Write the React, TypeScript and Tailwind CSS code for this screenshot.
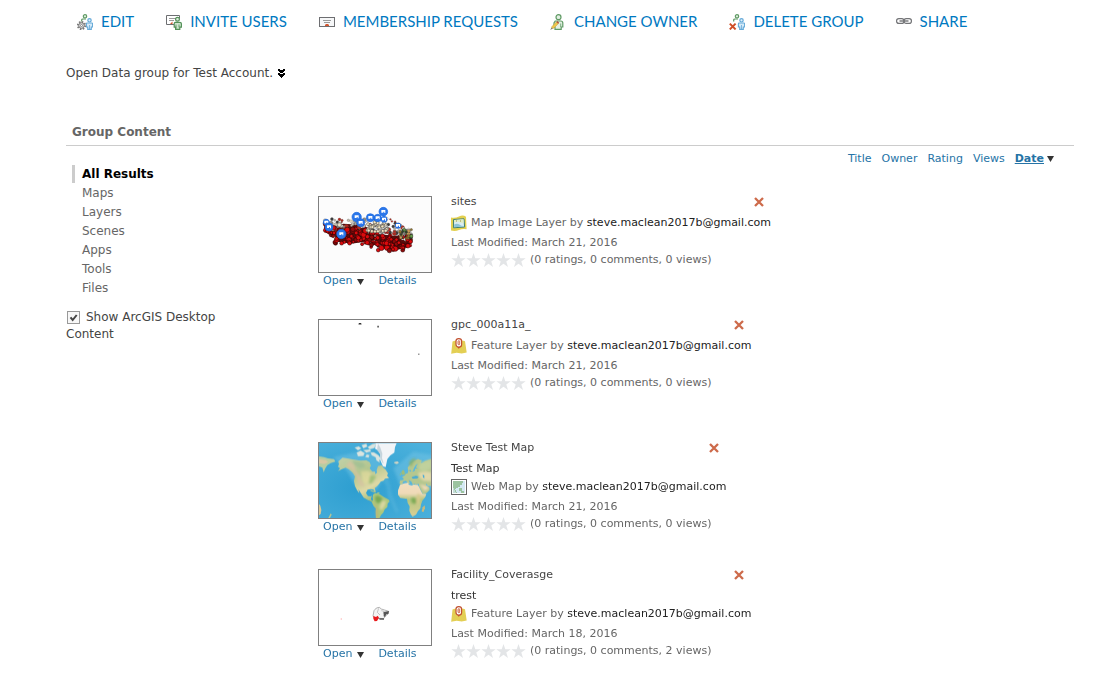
import { useState } from 'react'
import type { ReactNode } from 'react'

type Thumb = 'sites' | 'points' | 'world' | 'facility'
type Kind = 'Map Image Layer' | 'Feature Layer' | 'Web Map'

interface GroupItem {
  title: string
  description?: string
  kind: Kind
  owner: string
  modified: string
  views: number
  thumb: Thumb
}

const OWNER = 'steve.maclean2017b@gmail.com'

const items: GroupItem[] = [
  { title: 'sites', kind: 'Map Image Layer', owner: OWNER, modified: 'March 21, 2016', views: 0, thumb: 'sites' },
  { title: 'gpc_000a11a_', kind: 'Feature Layer', owner: OWNER, modified: 'March 21, 2016', views: 0, thumb: 'points' },
  {
    title: 'Steve Test Map',
    description: 'Test Map',
    kind: 'Web Map',
    owner: OWNER,
    modified: 'March 21, 2016',
    views: 0,
    thumb: 'world',
  },
  {
    title: 'Facility_Coverasge',
    description: 'trest',
    kind: 'Feature Layer',
    owner: OWNER,
    modified: 'March 18, 2016',
    views: 2,
    thumb: 'facility',
  },
]

const categories = ['All Results', 'Maps', 'Layers', 'Scenes', 'Apps', 'Tools', 'Files']
const sortFields = ['Title', 'Owner', 'Rating', 'Views', 'Date']

function Icon({ children }: { children: ReactNode }) {
  return (
    <svg viewBox="0 0 16 16" className="size-4 shrink-0" fill="none" aria-hidden="true">
      {children}
    </svg>
  )
}

// back green member and front blue member, shared by Edit and Delete
function Members() {
  return (
    <>
      <circle cx="8" cy="2.3" r="1.7" fill="#e3f0e3" stroke="#5f9a64" strokeWidth="1.2" />
      <path d="M4.7 7.5V6.2Q4.7 5 6 5h3" stroke="#5f9a64" strokeWidth="1.2" />
      <circle cx="12.5" cy="6.3" r="1.7" fill="#e1f0fa" stroke="#65a9d8" strokeWidth="1.2" />
      <path
        d="M10 9h5q.6 0 .6.8V13h-1.3v2.4h-3.6V13H9.4V9.8Q9.4 9 10 9z"
        fill="#d5eaf8"
        stroke="#65a9d8"
        strokeWidth="1.1"
      />
      <path d="M12.5 11v4" stroke="#65a9d8" strokeWidth=".8" />
    </>
  )
}

function EditIcon() {
  return (
    <Icon>
      <Members />
      <circle cx="4.5" cy="11.5" r="3.6" stroke="#777" strokeWidth="2" strokeDasharray="1.5 1.3" />
      <circle cx="4.5" cy="11.5" r="2.8" fill="#ddd" stroke="#777" strokeWidth="1" />
      <circle cx="4.5" cy="11.5" r="1" fill="#fff" stroke="#777" strokeWidth=".8" />
    </Icon>
  )
}

function InviteIcon() {
  return (
    <Icon>
      <path d="M8 10.5H.5v-9h13v3" stroke="#6d6e71" />
      <path d="M3 4.5h7M3 6.5h5" stroke="#999" />
      <path d="M4 10l2.5-2.5V10z" fill="#d3562f" />
      <circle cx="11.5" cy="5.3" r="1.9" fill="#dcecdc" stroke="#549159" strokeWidth="1.2" />
      <path
        d="M9.4 8.3h4.4q1.6 0 1.6 1.5v3.4h-1.6v2.2H9.6v-2.2H8.2V9.8q0-1.5 1.2-1.5z"
        fill="#cfe5cf"
        stroke="#549159"
        strokeWidth="1.2"
      />
      <path d="M10 10.5v4M13 10.5v3" stroke="#549159" strokeWidth=".8" />
    </Icon>
  )
}

function RequestIcon() {
  return (
    <Icon>
      <rect x=".5" y="3.5" width="15" height="9" fill="#f6f7f8" stroke="#6d6e71" />
      <path d="M4 6.5h8M5 8.5h6" stroke="#999" />
      <path d="M6 12v-1l1-1h2l1 1v1z" fill="#d3562f" />
    </Icon>
  )
}

function OwnerIcon() {
  return (
    <Icon>
      <circle cx="8.5" cy="3.2" r="2.5" fill="#e3f0e3" stroke="#5f9a64" strokeWidth="1.2" />
      <path
        d="M5.2 7h5.6q2 0 2 2v4h-1.6v2.4H5V13H4V9z"
        fill="#e3f0e3"
        stroke="#5f9a64"
        strokeWidth="1.2"
      />
      <path d="M10.7 9.5V13" stroke="#5f9a64" strokeWidth=".8" />
      <path d="M1.6 14.4l.4-2 4.6-4.6 1.8 1.8-4.6 4.6z" fill="#edc64b" stroke="#c89b3a" strokeWidth=".5" />
      <path d="M6.3 8l1.1-1.100 1.800 1.800-1.100 1.100z" fill="#b44b3c" />
      <path d="M.3 16l1.200-2.600 1.300 1.200z" fill="#777" />
    </Icon>
  )
}

function DeleteIcon() {
  return (
    <Icon>
      <Members />
      <path d="M.8 9.6l5.8 5.8M6.6 9.6L.8 15.4" stroke="#cf4e27" strokeWidth="2" />
    </Icon>
  )
}

function ShareIcon() {
  return (
    <Icon>
      <rect x=".6" y="4.600" width="7.400" height="4.800" rx="2.200" stroke="#737477" strokeWidth="1.200" />
      <rect x="8" y="4.600" width="7.400" height="4.800" rx="2.200" stroke="#737477" strokeWidth="1.200" />
      <path d="M3.500 7h9" stroke="#737477" strokeWidth="1.400" />
    </Icon>
  )
}

const actions = [
  { label: 'EDIT', icon: <EditIcon /> },
  { label: 'INVITE USERS', icon: <InviteIcon /> },
  { label: 'MEMBERSHIP REQUESTS', icon: <RequestIcon /> },
  { label: 'CHANGE OWNER', icon: <OwnerIcon /> },
  { label: 'DELETE GROUP', icon: <DeleteIcon /> },
  { label: 'SHARE', icon: <ShareIcon /> },
]

function KindIcon({ kind }: { kind: Kind }) {
  if (kind === 'Map Image Layer') {
    return (
      <Icon>
        <path d="M0 2.5q4 1 8-1t7 .3l.6 12.4q-4-.8-7.6.8t-8 .6z" fill="#e3d04f" />
        <path d="M2.5 4.5l10.5-.7.6 8.2-11 .8z" fill="#d9edf3" stroke="#3f7e6c" />
        <path d="M3.200 9.500q3-1.500 5 0t5 1.500v.6L3.200 12.200z" fill="#8cc4d8" />
        <path d="M3 5l9.500-.7V8Q10 8 8 7t-5 .5z" fill="#e0eec4" />
        <path d="M5 6h1M9 6h1" stroke="#9c8a3e" />
      </Icon>
    )
  }
  if (kind === 'Feature Layer') {
    return (
      <Icon>
        <path d="M1.500 3.500l3-1 3 1 4-1 2.500.8 1.700 11.200-5 1-5-.8-5.500 1z" fill="#e3cf54" />
        <rect x="5" y=".6" width="5.600" height="8.600" rx="2.700" fill="#fff" stroke="#c1502f" strokeWidth="1.200" />
        <rect x="7" y="2.700" width="1.700" height="4" rx=".8" fill="#f5d6cb" stroke="#c1502f" strokeWidth=".8" />
        <path d="M6.700 9h2.300L7.800 11z" fill="#c1502f" />
      </Icon>
    )
  }
  return (
    <Icon>
      <rect x=".5" y=".5" width="15" height="15" fill="#fff" stroke="#666" />
      <path d="M2 2h12v12H2z" fill="#d4e9f3" />
      <path d="M2 2h10v2h-1v2H9v2H7v1H5v1H4v1h1v2h1v1H2z" fill="#9cc3a0" />
      <path d="M2 9h1v2h1v2h1v1H2z" fill="#c3dcd7" />
      <path d="M8 9h3v3h2v2h-3v-2H8z" fill="#9cc3a0" />
    </Icon>
  )
}

// small deterministic generator for the clutter of symbols
function scatter(count: number, seed: number) {
  let s = seed
  const next = () => {
    s = (s * 16807) % 2147483647
    return s / 2147483647
  }
  return Array.from({ length: count }, () => [next(), next(), next()])
}

const topEdge = (x: number) => (x < 120 ? 100 : x < 240 ? 100 : 100 + (x - 240) * 0.6)
const bottomEdge = (x: number) => (x < 75 ? 126 + (x - 40) * 1.4 : x < 180 ? 180 : x < 290 ? 198 : 186)

function place([a, b]: number[], upper: number, lower: number) {
  const x = 45 + a * 258
  const top = topEdge(x)
  const h = bottomEdge(x) - top
  return [x, top + h * (upper + b * (lower - upper))]
}

const tones = ['#c9c1b2', '#8c8c8c', '#f1e6c8', '#ffffff', '#3b3b3b', '#b9b8b5', '#b42b20']
const blues = [
  [49, 112, 9],
  [57, 126, 12],
  [94, 147, 14],
  [140, 96, 14],
  [152, 113, 12],
  [181, 98, 12],
  [203, 99, 11],
  [220, 80, 13],
  [222, 103, 9],
  [264, 122, 8],
]

function SitesThumb() {
  return (
    <svg viewBox="27 36 336 225" className="block size-full" aria-hidden="true">
      <path d="M27 36h336v225H27z" fill="#fcfcfc" />
      <path
        d="M60 128l40-12 60 4 40 26 50 6 40-6 14 20-10 20-30 8-40-2-30-26-30 4-40 6-40-6z"
        fill="#5a0c0c"
      />
      {scatter(180, 71).map((p, i) => {
        const [x, y] = place(p, 0, 0.55)
        return (
          <circle
            key={i}
            cx={x}
            cy={y}
            r={2.5 + p[2] * 4}
            fill={tones[i % tones.length]}
            stroke="#444"
            strokeWidth=".8"
          />
        )
      })}
      {scatter(180, 913).map((p, i) => {
        const [x, y] = place(p, 0.4, 1)
        return (
          <circle
            key={i}
            cx={x}
            cy={y}
            r={3 + p[2] * 5}
            fill={i % 5 ? '#dc0a0d' : '#8d0b0b'}
            stroke="#1c0202"
            strokeWidth="1.5"
          />
        )
      })}
      {scatter(34, 401).map((p, i) => (
        <circle
          key={i}
          cx={172 + p[0] * 62}
          cy={112 + p[1] * 32}
          r="4.500"
          fill="#f3e4c1"
          stroke="#444"
          strokeWidth="1.500"
        />
      ))}
      {scatter(22, 55).map((p, i) => (
        <circle
          key={i}
          cx={270 + p[0] * 34}
          cy={134 + p[1] * 26}
          r={3 + p[2] * 3}
          fill={['#96772d', '#2f4a2a', '#c99b5a', '#6aa04c'][i % 4]}
          stroke="#222"
        />
      ))}
      {blues.map(([x, y, r]) => (
        <g key={`${x}-${y}`}>
          <circle cx={x} cy={y} r={r} fill="#2b77ea" stroke="#1667df" strokeWidth="2" />
          <path d={`M${x - 6} ${y - 5}h12v9h-3v-4h-3v3h-6z`} fill="#fff" />
        </g>
      ))}
    </svg>
  )
}

function PointsThumb() {
  return (
    <svg viewBox="0 0 112 75" className="block size-full" aria-hidden="true">
      <path d="M40 3h2v1h-2zM39.500 3.500h3v1h-3z" fill="#333" />
      <path d="M58.300 5.700h1.600v1.800h-1.600z" fill="#555" />
      <path d="M99 33.500h1.500V35H99z" fill="#999" />
    </svg>
  )
}

function FacilityThumb() {
  return (
    <svg viewBox="27 30 336 225" className="block size-full" aria-hidden="true">
      <path
        d="M192 152l7-8 9-2 6 5 10 3 12 4-2 8-8 6-5 8-12-1-14 2-6-9z"
        fill="#f4f4f4"
        stroke="#8f8f8f"
        strokeWidth="2"
      />
      <path d="M206 145l-4 12 8 8M214 152l8 2-2 6 6 2" stroke="#aaa" strokeWidth="2" fill="none" />
      <path d="M221 156l16-3-2 9-6 1-4 8-4-2z" fill="#555" />
      <path d="M190 168l8 3 5-4 4 6-6 10-7 1-4-8z" fill="#e8191c" />
      <path d="M207 175h15v4h-13z" fill="#555" />
      <path d="M92 175h4v4h-4z" fill="#ffc4c4" />
    </svg>
  )
}

function WorldThumb() {
  return (
    <svg viewBox="27 24 336 225" preserveAspectRatio="none" className="block size-full" aria-hidden="true">
      <defs>
        <radialGradient id="sea" cx=".35" cy=".6" r=".8">
          <stop offset="0" stopColor="#2d9ed0" />
          <stop offset="1" stopColor="#4cb1dc" />
        </radialGradient>
        <linearGradient id="america" x1="0" y1="0" x2=".6" y2="1">
          <stop offset="0" stopColor="#c2d1a9" />
          <stop offset=".45" stopColor="#b4c68f" />
          <stop offset=".75" stopColor="#dfd9a6" />
          <stop offset="1" stopColor="#9dba74" />
        </linearGradient>
        <linearGradient id="africa" x1="0" y1="0" x2="0" y2="1">
          <stop offset="0" stopColor="#f3dfc0" />
          <stop offset=".32" stopColor="#efdab8" />
          <stop offset=".5" stopColor="#b5c680" />
          <stop offset="1" stopColor="#dccf94" />
        </linearGradient>
        <filter id="soft">
          <feGaussianBlur stdDeviation="4" />
        </filter>
        <filter id="patch">
          <feGaussianBlur stdDeviation="2.500" />
        </filter>
      </defs>
      <path d="M27 24h336v225H27z" fill="url(#sea)" />
      <g fill="#7cc8e6" opacity=".45" filter="url(#soft)">
        <path d="M70 66l50-10 60-10 50 60-30 60-60-10-30-50zM250 100l60-50 60 10v100l-100-10z" />
        <path d="M212 100l26 40 8 40 20 50-8 4-24-50-4-30-24-40z" opacity=".6" />
      </g>
      {/* eastern Siberia */}
      <path d="M27 64l15 2 12 4 18 2 4 8-14 4-10 6-6 10-5 12-4-14-10-4z" fill="#b6cda2" />
      <path d="M27 72l20 3 8 6-12 6-16-2z" fill="#d8c8a4" />
      {/* Arctic islands */}
      <g fill="#dbe4df" stroke="#8fc7db" strokeWidth="1">
        <path d="M140 53l12-6 12 7-4 9-16 1zM134 38l12-4 8 6-10 6zM155 30l14-4 3 9-12 5zM173 36l14-9 13-3-7 15-14 4z" />
        <path d="M160 45l20-2 3 6-14 4zM182 52l10 0 14 9 8 12-6 2 1 8-10-7-2-9-12-6zM170 58l8 2-2 8-10-2z" />
      </g>
      {/* North America */}
      <path
        d="M85 79l13-11 14 2 20 4 19 3 18-1 10 5 4 11-4 8 8 10 8 0 1 8 5-5-1-8 4-12 11-2 6 8 5 4 8 12-3 7 6 7-12 2-4 6-9 3-5 7-6 7-7 5 3 9-2 3-5-8-8-1-9 2-5 10 6 9 8 1 4-2-3 8 1 5 7 3 4 7-5 0-8-7-8-3-13-7-8-13-8-13 3 13-7-10-6-12-3-15 3-14-6-10-12-11-10-5-11 4-12 6 6-8-6-5 3-8z"
        fill="url(#america)"
      />
      <g filter="url(#patch)">
        <path d="M120 78l13 10 4 19 13 15 3 12 10 15-5 8-14-14-6-20-10-16-20-16z" fill="#d8c3a2" opacity=".75" />
        <path d="M126 77l30 4 12 12-18 8-18-12z" fill="#9dbd91" opacity=".7" />
        <path d="M152 109l20-2 12 8-4 25-16 7-7-14z" fill="#e2dc9d" opacity=".7" />
        <path d="M180 122l14-2 4 6-12 18-10 2z" fill="#a5c27c" />
      </g>
      {/* Greenland, Iceland */}
      <path d="M198 24h62l-5 12-2 17-12 8-9 11-5 24-8-2-8-18 0-17-6-12-10-6z" fill="#f2f4f7" />
      <path d="M204 26l7 12 6 18-1 13 5 16-3-1-7-13 0-14-10-12z" fill="#c6d4dc" />
      <path d="M253 81l9-2 5 4-6 4-8-2z" fill="#d5d6c4" />
      {/* Caribbean */}
      <path d="M181 165l12 3 6 4-6 0-11-4zM202 172l7 1-1 2-6 0z" fill="#b4c585" />
      {/* South America */}
      <path
        d="M189 179l6-5 11 2 9 6 7 4 14 8 3 5-6 7-1 10-8 7-4 10-7 7-5 10h-10l-1-21 1-8-7-8-5-10 3-8-1-7z"
        fill="#adc77c"
      />
      <g filter="url(#patch)">
        <path d="M195 184l10-2 12 7-3 12-12 4-6-8z" fill="#79a957" />
        <path d="M215 198l14 0-5 16-10 12-6-8z" fill="#dad7a0" />
        <path d="M190 200l5 8 6 8 2 31h-4l-1-31-6-10z" fill="#caa677" />
      </g>
      {/* Europe and Asia */}
      <path
        d="M269 146l1-10 10-1 1-5-5-4 7-4 5-6 6-2 1-9 3-2 1 6 10 1 6-3 0-6 9-1-6-2 2-7 4-4-6 2-6 10-3 9-4 3-4-7-7 1-1-8 10-12 9-8 12-5 13 5-5 4 3 5 10-8 15-5 13-7v91l-9-4-10-1-6-7 0 6 10 6 1 8-9 9-11 4-5-10-7-15 0-6-11 1-4-3-2 5-3-4-3-7-8-4 4 10-5 1-7-9-9 2-1 6-4 5z"
        fill="#b5c78f"
      />
      <g filter="url(#patch)">
        <path d="M299 80l9-8 8-2 1 5-7 6-7 13-5-4z" fill="#88b06f" />
        <path d="M329 85l34-12v28l-22 8-15-6z" fill="#c0d19d" />
        <path d="M324 112l26-3 15 3v27l-24-2-12-8z" fill="#e1d8aa" />
        <path d="M328 148l15 3 12 4-2 8-10 4-6-9z" fill="#efd9b7" />
      </g>
      <path d="M305 126l13-4 8 3-4 5-14 1zM338 118l5 3 0 9-4-3z" fill="#49abd5" />
      <path d="M274 111l5-7 4 3 1 7 3 3-10 3zM270 116l4-3 0 6-5 2z" fill="#9fbc7b" />
      {/* Africa */}
      <path
        d="M270 150l12-5 13-2 1 6 9 2 6-2 12 1 4 5 6 13 5 9 11 0-3 9-9 11-4 11-2 12-7 8-6 11-10 5-5-5-5-12 1-13-6-10-2-12-9-2-11-1-7-10 0-13z"
        fill="url(#africa)"
      />
      <g filter="url(#patch)">
        <path d="M303 189l12-1 6 9-4 10-12-3z" fill="#7fab57" />
        <path d="M324 174l8 12-5 18-6 10-2-20z" fill="#d8c98b" />
      </g>
      <path d="M338 217l6-6 1 9-5 12-5-3z" fill="#c8ba7c" />
      {/* Australia and New Zealand edge */}
      <path d="M27 207l4 5 3 13-2 12-5 4z" fill="#d9c996" />
      <path d="M62 235l3 4-5 10h-5z" fill="#b7c694" />
    </svg>
  )
}

const thumbs = {
  sites: <SitesThumb />,
  points: <PointsThumb />,
  world: <WorldThumb />,
  facility: <FacilityThumb />,
}

function DownTriangle() {
  return (
    <svg viewBox="0 0 7 6" className="h-[6px] w-[7px] shrink-0" aria-hidden="true">
      <path d="M0 0h7L3.500 6z" fill="#333" />
    </svg>
  )
}

function Stars() {
  return (
    <svg viewBox="0 0 75 14" className="h-[14px] w-[75px] shrink-0" fill="#e3e5e7" aria-hidden="true">
      {[0, 15, 30, 45, 60].map((x) => (
        <path
          key={x}
          transform={`translate(${x} 0)`}
          d="M7.500 0l1.800 5.200h5.400l-4.400 3.300 1.700 5.500-4.500-3.300L3 14l1.700-5.500L.3 5.200h5.400z"
        />
      ))}
    </svg>
  )
}

function ItemRow({ item }: { item: GroupItem }) {
  return (
    <li className="flex items-start text-[11px]">
      <div className="w-[114px] shrink-0 pt-[6px]">
        <a href="#item" aria-label={item.title} className="block h-[77px] border border-[#808080] bg-white">
          {thumbs[item.thumb]}
        </a>
        <div className="flex h-[17px] items-center gap-[14px] pl-[5px] text-[#2573a6]">
          <button type="button" className="flex cursor-pointer items-center gap-[5px] hover:underline">
            Open
            <DownTriangle />
          </button>
          <a href="#details" className="hover:underline">
            Details
          </a>
        </div>
      </div>

      <div className="ml-[19px] pt-px pb-[9px] text-[#666]">
        <div className="flex h-[22px] items-center justify-between pr-[7px]">
          <a href="#item" className="text-[#444] hover:underline">
            {item.title}
          </a>
          <button type="button" aria-label={`Remove ${item.title}`} className="cursor-pointer">
            <svg viewBox="0 0 10 10" className="block size-[10px]" aria-hidden="true">
              <path d="M1 1l8 8M9 1L1 9" stroke="#cd6a4a" strokeWidth="2.300" />
            </svg>
          </button>
        </div>
        {item.description && <p className="h-[18px] leading-5 text-[#333]">{item.description}</p>}
        <div className="flex h-5 items-center gap-1">
          <KindIcon kind={item.kind} />
          <p>
            {item.kind} by{' '}
            <a href="#owner" className="text-[#222] hover:underline">
              {item.owner}
            </a>
          </p>
        </div>
        <p className="h-5 leading-5">Last Modified: {item.modified}</p>
        <div className="flex h-[14px] items-center gap-1">
          <Stars />
          <span>(0 ratings, 0 comments, {item.views} views)</span>
        </div>
      </div>
    </li>
  )
}

export default function App() {
  const [category, setCategory] = useState('All Results')
  const [sort, setSort] = useState('Date')
  const [showDesktop, setShowDesktop] = useState(true)

  return (
    <div className="min-h-screen bg-white pr-[19px] pl-[66px] font-['DejaVu_Sans',Verdana,sans-serif] text-xs text-[#444]">
      <nav className="flex h-11 items-center gap-8 pl-[11px] font-['Lato',sans-serif] text-[15px] whitespace-nowrap text-[#0079c1]">
        {actions.map(({ label, icon }) => (
          <a key={label} href="#action" className="flex items-center gap-2 hover:underline">
            {icon}
            {label}
          </a>
        ))}
      </nav>

      <div className="flex items-center gap-1 pt-[21px]">
        <p>Open Data group for Test Account.</p>
        <button type="button" aria-label="Show more" className="cursor-pointer">
          <svg viewBox="0 0 9 9" className="block size-[9px]" shapeRendering="crispEdges" aria-hidden="true">
            <path d="M1 0h2v1h3V0h2v2H7v1H6v1H3V3H2V2H1zM1 4h2v1h3V4h2v2H7v1H6v1H5v1H4V8H3V7H2V6H1z" fill="#000" />
          </svg>
        </button>
      </div>

      <h2 className="mt-[43px] border-b border-[#ccc] pb-[5px] pl-[6px] text-xs font-bold text-[#666]">
        Group Content
      </h2>

      <div className="flex">
        <aside className="w-[252px] shrink-0 pt-[19px]">
          <ul className="pl-[6px]">
            {categories.map((name) => (
              <li key={name} className="h-[19px]">
                <a
                  href="#filter"
                  onClick={() => setCategory(name)}
                  className={
                    name === category
                      ? 'block h-[18px] border-l-3 border-[#ccc] pl-[7px] leading-[18px] font-bold text-black'
                      : 'block h-[18px] pl-[10px] leading-[18px] text-[#666] hover:underline'
                  }
                >
                  {name}
                </a>
              </li>
            ))}
          </ul>
          <label htmlFor="desktop" className="mt-[11px] block w-[175px] leading-[17px]">
            <span className="relative mr-[6px] ml-px inline-block size-[13px] align-[-3px]">
              <input
                id="desktop"
                type="checkbox"
                checked={showDesktop}
                onChange={(e) => setShowDesktop(e.target.checked)}
                className="block size-[13px] appearance-none border border-[#999] bg-[#f7f7f7]"
              />
              {showDesktop && (
                <svg viewBox="0 0 13 13" className="pointer-events-none absolute inset-0" fill="none" aria-hidden="true">
                  <path d="M3.500 6.300l2.200 2.700 4-5" stroke="#444" strokeWidth="2" />
                </svg>
              )}
            </span>
            Show ArcGIS Desktop Content
          </label>
        </aside>

        <main className="min-w-0 flex-1">
          <div className="flex h-[26px] items-center justify-end gap-[10px] pr-5 text-[11px] text-[#2573a6]">
            {sortFields.map((field) => (
              <button
                key={field}
                type="button"
                onClick={() => setSort(field)}
                className={
                  field === sort
                    ? 'flex cursor-pointer items-center gap-[3px] font-bold'
                    : 'cursor-pointer hover:underline'
                }
              >
                <span className={field === sort ? 'underline' : ''}>{field}</span>
                {field === sort && <DownTriangle />}
              </button>
            ))}
          </div>
          <ul className="flex flex-col gap-[23px] pt-[18px]">
            {items.map((item) => (
              <ItemRow key={item.title} item={item} />
            ))}
          </ul>
        </main>
      </div>
    </div>
  )
}
